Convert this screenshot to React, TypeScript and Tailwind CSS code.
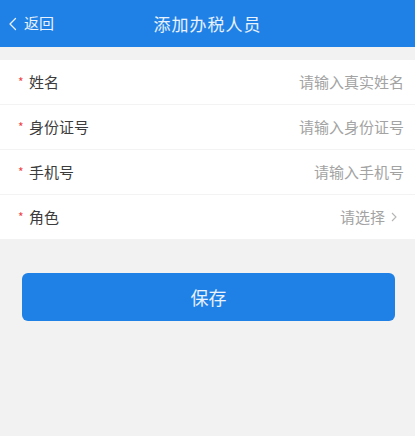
import React from "react";

const fields = [
  { label: "姓名", placeholder: "请输入真实姓名" },
  { label: "身份证号", placeholder: "请输入身份证号" },
  { label: "手机号", placeholder: "请输入手机号" },
];

export default function App() {
  return (
    <div
      className="w-[415px] h-[436px] bg-[#f2f2f2] overflow-hidden"
      style={{ fontFamily: '"Noto Sans CJK SC", "Noto Sans", sans-serif' }}
    >
      {/* Header */}
      <div className="relative h-[47px] bg-[#1f80e6] flex items-center justify-center">
        <div className="absolute left-[8px] top-0 h-full flex items-center gap-[6px] text-[15px] text-white/90">
          <svg width="10" height="16" viewBox="0 0 10 16" fill="none">
            <path d="M7.5 2.5L2 8l5.5 5.5" stroke="white" strokeOpacity="0.9" strokeWidth="1.3" strokeLinecap="round" strokeLinejoin="round" />
          </svg>
          <span>返回</span>
        </div>
        <span className="text-[17px] text-white/90 tracking-[1px]">添加办税人员</span>
      </div>

      {/* Form */}
      <div className="mt-[13px] bg-white">
        {fields.map((f) => (
          <div key={f.label} className="h-[45px] flex items-center justify-between pl-[18px] pr-[11px] border-b border-[#f3f3f3]">
            <div className="flex items-center text-[15px] text-[#3c3c3c]">
              <span className="text-[#f04545] text-[12px] w-[11px]">*</span>
              <span>{f.label}</span>
            </div>
            <span className="text-[15px] text-[#a3a3a3]">{f.placeholder}</span>
          </div>
        ))}
        <div className="h-[44px] flex items-center justify-between pl-[18px] pr-[18px]">
          <div className="flex items-center text-[15px] text-[#3c3c3c]">
            <span className="text-[#f04545] text-[12px] w-[11px]">*</span>
            <span>角色</span>
          </div>
          <div className="flex items-center gap-[6px] text-[15px] text-[#a3a3a3]">
            <span>请选择</span>
            <svg width="6" height="10" viewBox="0 0 6 10" fill="none">
              <path d="M1 1l4 4-4 4" stroke="#b5b5b5" strokeWidth="1.1" />
            </svg>
          </div>
        </div>
      </div>

      {/* Save */}
      <div className="pl-[22px] pr-[20px] pt-[34px]">
        <button className="w-full h-[48px] rounded-[6px] bg-[#1f80e6] text-white/90 text-[18px]">保存</button>
      </div>
    </div>
  );
}
